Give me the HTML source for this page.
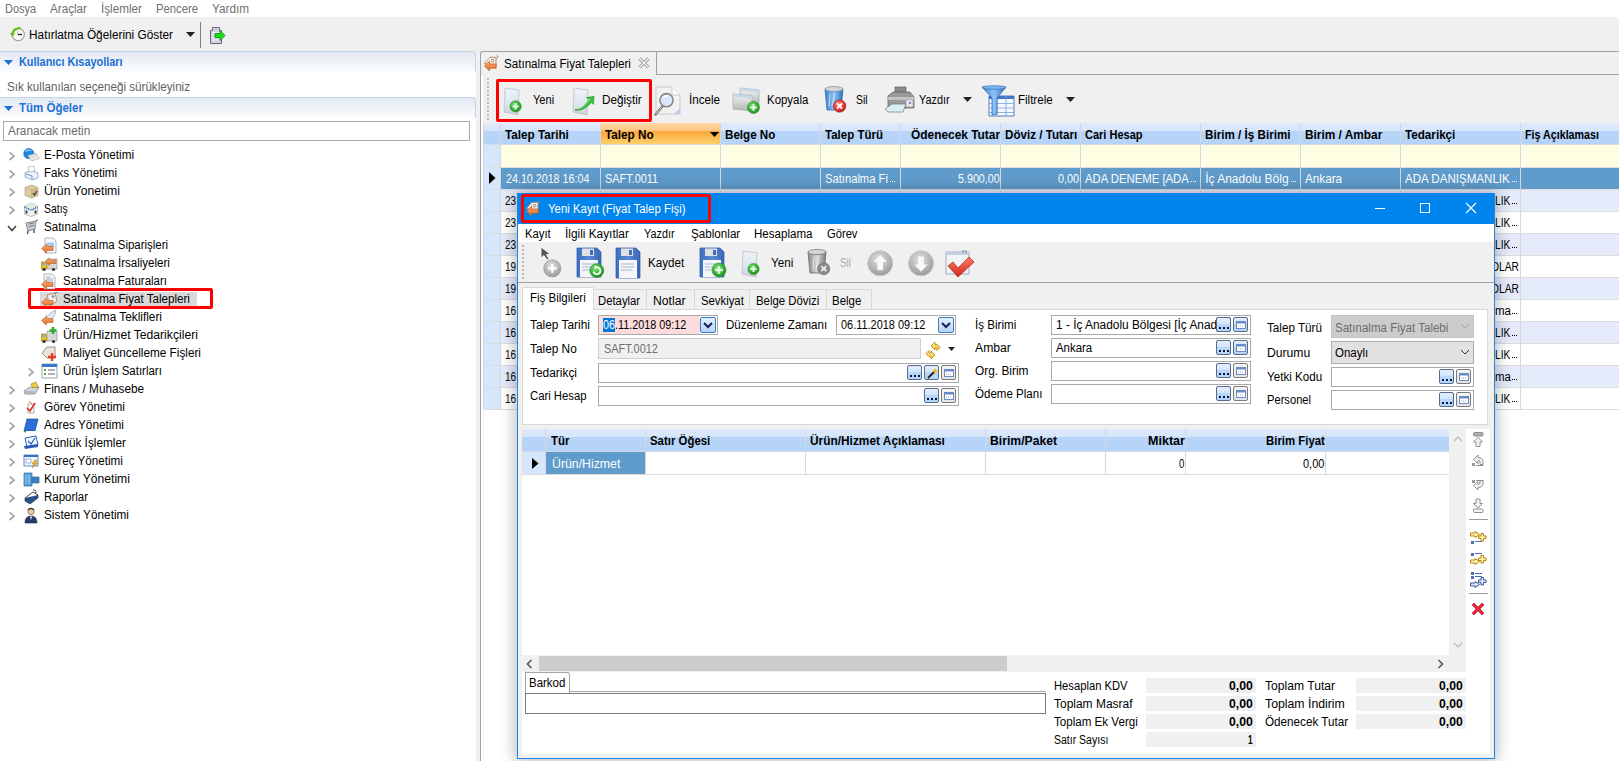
<!DOCTYPE html><html><head><meta charset="utf-8"><style>
html,body{margin:0;padding:0;width:1619px;height:761px;overflow:hidden;background:#f0f0f0;font-family:"Liberation Sans", sans-serif;}
.t{position:absolute;white-space:nowrap;line-height:16px;transform-origin:0 0;}
</style></head><body>
<div style="position:absolute;left:0px;top:0px;width:1619px;height:17px;background:#fff"></div>
<div class="t" style="left:4.50px;top:0.84px;font-size:12px;color:#6f6f6f;font-weight:400;transform:scaleX(0.9118);">Dosya</div>
<div class="t" style="left:50.00px;top:0.84px;font-size:12px;color:#6f6f6f;font-weight:400;transform:scaleX(0.9737);">Araçlar</div>
<div class="t" style="left:101.00px;top:0.84px;font-size:12px;color:#6f6f6f;font-weight:400;transform:scaleX(0.9762);">İşlemler</div>
<div class="t" style="left:156.00px;top:0.84px;font-size:12px;color:#6f6f6f;font-weight:400;transform:scaleX(0.9385);">Pencere</div>
<div class="t" style="left:212.00px;top:0.84px;font-size:12px;color:#6f6f6f;font-weight:400;transform:scaleX(0.9801);">Yardım</div>
<svg style="position:absolute;left:9px;top:26px;" width="18" height="18" viewBox="0 0 18 18"><circle cx="9.2" cy="8.5" r="6.2" fill="#f8f8f8" stroke="#9a9a9a" stroke-width="1.1"/><path d="M8.8 8.5H13" stroke="#222" stroke-width="1.3"/><path d="M8.5 5V8.5" stroke="#c0c0c0" stroke-width="1"/><path d="M11.5 2.2Q5 2.2 3.6 7.5" stroke="#66bb10" stroke-width="2.2" fill="none"/><path d="M0.8 7.2H6.2L3.6 10.8Z" fill="#66bb10"/></svg>
<div class="t" style="left:29.00px;top:26.84px;font-size:12px;color:#000;font-weight:400;transform:scaleX(0.9863);">Hatırlatma Öğelerini Göster</div>
<svg style="position:absolute;left:186px;top:32px;" width="9" height="6" viewBox="0 0 9 6"><path d="M0 0H9L4.5 5Z" fill="#222"/></svg>
<div style="position:absolute;left:200px;top:22px;width:1px;height:26px;background:#7e7e7e"></div>
<svg style="position:absolute;left:204px;top:26px;" width="22" height="19" viewBox="0 0 22 19"><path d="M8.5 1.5H15.5V4.5H17.5V17.5H6.5V4.5H8.5Z" fill="#d4d0e0" stroke="#6a6880" stroke-width="1"/><path d="M8 6.5H16M8 9H16M8 11.5H16M8 14H16" stroke="#f4f2fa" stroke-width="1"/><path d="M11 7.5H16V4.5L21 9.5L16 14.5V11.5H11Z" fill="#18e018" stroke="#0a8a0a" stroke-width="0.8"/></svg>
<div style="position:absolute;left:0px;top:51px;width:476px;height:710px;background:#fff"></div>
<div style="position:absolute;left:0px;top:51px;width:476px;height:21px;background:linear-gradient(#e3e9f2,#fbfcfd);border-top:1px solid #c3d4ea;border-right:1px solid #c3d4ea;border-top-right-radius:3px;box-sizing:border-box"></div>
<svg style="position:absolute;left:4px;top:60px;" width="9" height="5" viewBox="0 0 9 5"><path d="M0 0H9L4.5 5Z" fill="#1a73d9"/></svg>
<div class="t" style="left:18.50px;top:53.84px;font-size:12px;color:#1d70d6;font-weight:700;transform:scaleX(0.9079);">Kullanıcı Kısayolları</div>
<div class="t" style="left:7.00px;top:78.84px;font-size:12px;color:#5f5f5f;font-weight:400;transform:scaleX(0.9695);">Sık kullanılan seçeneği sürükleyiniz</div>
<div style="position:absolute;left:0px;top:97px;width:476px;height:21px;background:linear-gradient(#e3e9f2,#fbfcfd);border-top:1px solid #c3d4ea;border-right:1px solid #c3d4ea;border-top-right-radius:3px;box-sizing:border-box"></div>
<svg style="position:absolute;left:4px;top:106px;" width="9" height="5" viewBox="0 0 9 5"><path d="M0 0H9L4.5 5Z" fill="#1a73d9"/></svg>
<div class="t" style="left:18.50px;top:99.84px;font-size:12px;color:#1d70d6;font-weight:700;transform:scaleX(0.9588);">Tüm Öğeler</div>
<div style="position:absolute;left:3px;top:121px;width:467px;height:20px;background:#fff;border:1px solid #a9a9a9;box-sizing:border-box"></div>
<div class="t" style="left:8.20px;top:122.84px;font-size:12px;color:#6d6d6d;font-weight:400;transform:scaleX(0.9868);">Aranacak metin</div>
<svg style="position:absolute;left:8px;top:150.5px;" width="8" height="11" viewBox="0 0 8 11"><path d="M1.6 1.4L6 5.2L1.6 9" stroke="#a4a4a4" stroke-width="1.7" fill="none"/></svg>
<div class="t" style="left:44.00px;top:147.34px;font-size:12px;color:#000;font-weight:400;transform:scaleX(0.9730);">E-Posta Yönetimi</div>
<svg style="position:absolute;left:8px;top:168.5px;" width="8" height="11" viewBox="0 0 8 11"><path d="M1.6 1.4L6 5.2L1.6 9" stroke="#a4a4a4" stroke-width="1.7" fill="none"/></svg>
<div class="t" style="left:44.00px;top:165.34px;font-size:12px;color:#000;font-weight:400;transform:scaleX(0.9637);">Faks Yönetimi</div>
<svg style="position:absolute;left:8px;top:186.5px;" width="8" height="11" viewBox="0 0 8 11"><path d="M1.6 1.4L6 5.2L1.6 9" stroke="#a4a4a4" stroke-width="1.7" fill="none"/></svg>
<div class="t" style="left:44.00px;top:183.34px;font-size:12px;color:#000;font-weight:400;transform:scaleX(1.0167);">Ürün Yonetimi</div>
<svg style="position:absolute;left:8px;top:204.5px;" width="8" height="11" viewBox="0 0 8 11"><path d="M1.6 1.4L6 5.2L1.6 9" stroke="#a4a4a4" stroke-width="1.7" fill="none"/></svg>
<div class="t" style="left:44.00px;top:201.34px;font-size:12px;color:#000;font-weight:400;transform:scaleX(0.8697);">Satış</div>
<svg style="position:absolute;left:7px;top:224.5px;" width="10" height="7" viewBox="0 0 10 7"><path d="M1 1L5 5.5L9 1" stroke="#444" stroke-width="1.5" fill="none"/></svg>
<div class="t" style="left:44.00px;top:219.34px;font-size:12px;color:#000;font-weight:400;transform:scaleX(0.9630);">Satınalma</div>
<div class="t" style="left:63.00px;top:237.34px;font-size:12px;color:#000;font-weight:400;transform:scaleX(0.9545);">Satınalma Siparişleri</div>
<div class="t" style="left:63.00px;top:255.34px;font-size:12px;color:#000;font-weight:400;transform:scaleX(0.9596);">Satınalma İrsaliyeleri</div>
<div class="t" style="left:63.00px;top:273.34px;font-size:12px;color:#000;font-weight:400;transform:scaleX(0.9563);">Satınalma Faturaları</div>
<div style="position:absolute;left:40px;top:292px;width:157px;height:14px;background:#d9d9d9"></div>
<div class="t" style="left:63.00px;top:291.34px;font-size:12px;color:#000;font-weight:400;transform:scaleX(0.9676);">Satınalma Fiyat Talepleri</div>
<div class="t" style="left:63.00px;top:309.34px;font-size:12px;color:#000;font-weight:400;transform:scaleX(0.9851);">Satınalma Teklifleri</div>
<div class="t" style="left:63.00px;top:327.34px;font-size:12px;color:#000;font-weight:400;transform:scaleX(1.0131);">Ürün/Hizmet Tedarikçileri</div>
<div class="t" style="left:63.00px;top:345.34px;font-size:12px;color:#000;font-weight:400;transform:scaleX(0.9805);">Maliyet Güncelleme Fişleri</div>
<svg style="position:absolute;left:27px;top:366.5px;" width="8" height="11" viewBox="0 0 8 11"><path d="M1.6 1.4L6 5.2L1.6 9" stroke="#a4a4a4" stroke-width="1.7" fill="none"/></svg>
<div class="t" style="left:63.00px;top:363.34px;font-size:12px;color:#000;font-weight:400;transform:scaleX(0.9565);">Ürün İşlem Satırları</div>
<svg style="position:absolute;left:8px;top:384.5px;" width="8" height="11" viewBox="0 0 8 11"><path d="M1.6 1.4L6 5.2L1.6 9" stroke="#a4a4a4" stroke-width="1.7" fill="none"/></svg>
<div class="t" style="left:44.00px;top:381.34px;font-size:12px;color:#000;font-weight:400;transform:scaleX(0.9804);">Finans / Muhasebe</div>
<svg style="position:absolute;left:8px;top:402.5px;" width="8" height="11" viewBox="0 0 8 11"><path d="M1.6 1.4L6 5.2L1.6 9" stroke="#a4a4a4" stroke-width="1.7" fill="none"/></svg>
<div class="t" style="left:44.00px;top:399.34px;font-size:12px;color:#000;font-weight:400;transform:scaleX(0.9818);">Görev Yönetimi</div>
<svg style="position:absolute;left:8px;top:420.5px;" width="8" height="11" viewBox="0 0 8 11"><path d="M1.6 1.4L6 5.2L1.6 9" stroke="#a4a4a4" stroke-width="1.7" fill="none"/></svg>
<div class="t" style="left:44.00px;top:417.34px;font-size:12px;color:#000;font-weight:400;transform:scaleX(0.9846);">Adres Yönetimi</div>
<svg style="position:absolute;left:8px;top:438.5px;" width="8" height="11" viewBox="0 0 8 11"><path d="M1.6 1.4L6 5.2L1.6 9" stroke="#a4a4a4" stroke-width="1.7" fill="none"/></svg>
<div class="t" style="left:44.00px;top:435.34px;font-size:12px;color:#000;font-weight:400;transform:scaleX(0.9820);">Günlük İşlemler</div>
<svg style="position:absolute;left:8px;top:456.5px;" width="8" height="11" viewBox="0 0 8 11"><path d="M1.6 1.4L6 5.2L1.6 9" stroke="#a4a4a4" stroke-width="1.7" fill="none"/></svg>
<div class="t" style="left:44.00px;top:453.34px;font-size:12px;color:#000;font-weight:400;transform:scaleX(0.9723);">Süreç Yönetimi</div>
<svg style="position:absolute;left:8px;top:474.5px;" width="8" height="11" viewBox="0 0 8 11"><path d="M1.6 1.4L6 5.2L1.6 9" stroke="#a4a4a4" stroke-width="1.7" fill="none"/></svg>
<div class="t" style="left:44.00px;top:471.34px;font-size:12px;color:#000;font-weight:400;transform:scaleX(1.0088);">Kurum Yönetimi</div>
<svg style="position:absolute;left:8px;top:492.5px;" width="8" height="11" viewBox="0 0 8 11"><path d="M1.6 1.4L6 5.2L1.6 9" stroke="#a4a4a4" stroke-width="1.7" fill="none"/></svg>
<div class="t" style="left:44.00px;top:489.34px;font-size:12px;color:#000;font-weight:400;transform:scaleX(0.9565);">Raporlar</div>
<svg style="position:absolute;left:8px;top:510.5px;" width="8" height="11" viewBox="0 0 8 11"><path d="M1.6 1.4L6 5.2L1.6 9" stroke="#a4a4a4" stroke-width="1.7" fill="none"/></svg>
<div class="t" style="left:44.00px;top:507.34px;font-size:12px;color:#000;font-weight:400;transform:scaleX(0.9827);">Sistem Yönetimi</div>
<div style="position:absolute;left:28px;top:288px;width:185px;height:21px;border:3px solid #ff0000;box-sizing:border-box;border-radius:2px"></div>
<div style="position:absolute;left:476px;top:51px;width:4px;height:710px;background:#f0f0f0"></div>
<div style="position:absolute;left:481px;top:52px;width:1138px;height:709px;background:#f0f0f0"></div>
<div style="position:absolute;left:480px;top:51px;width:1200px;height:800px;border-left:1px solid #a0a0a0;border-top:1px solid #a0a0a0;border-top-left-radius:3px;box-sizing:border-box"></div>
<div style="position:absolute;left:656px;top:52px;width:1px;height:22px;background:#a0a0a0"></div>
<div style="position:absolute;left:656px;top:74px;width:963px;height:1px;background:#a0a0a0"></div>
<div class="t" style="left:504.20px;top:55.84px;font-size:12px;color:#000;font-weight:400;transform:scaleX(0.9676);">Satınalma Fiyat Talepleri</div>
<svg style="position:absolute;left:638px;top:57px;" width="12" height="12" viewBox="0 0 12 12"><path d="M1.5 1.5L10.5 10.5M10.5 1.5L1.5 10.5" stroke="#888" stroke-width="3"/><path d="M1.5 1.5L10.5 10.5M10.5 1.5L1.5 10.5" stroke="#fff" stroke-width="1.2"/></svg>
<div style="position:absolute;left:481px;top:76px;width:2px;height:685px;background:#fff"></div>
<div style="position:absolute;left:487px;top:78px;width:2px;height:2px;background:#a8a8a8;border-radius:1px"></div>
<div style="position:absolute;left:487px;top:82px;width:2px;height:2px;background:#a8a8a8;border-radius:1px"></div>
<div style="position:absolute;left:487px;top:86px;width:2px;height:2px;background:#a8a8a8;border-radius:1px"></div>
<div style="position:absolute;left:487px;top:90px;width:2px;height:2px;background:#a8a8a8;border-radius:1px"></div>
<div style="position:absolute;left:487px;top:94px;width:2px;height:2px;background:#a8a8a8;border-radius:1px"></div>
<div style="position:absolute;left:487px;top:98px;width:2px;height:2px;background:#a8a8a8;border-radius:1px"></div>
<div style="position:absolute;left:487px;top:102px;width:2px;height:2px;background:#a8a8a8;border-radius:1px"></div>
<div style="position:absolute;left:487px;top:106px;width:2px;height:2px;background:#a8a8a8;border-radius:1px"></div>
<div style="position:absolute;left:487px;top:110px;width:2px;height:2px;background:#a8a8a8;border-radius:1px"></div>
<div style="position:absolute;left:487px;top:114px;width:2px;height:2px;background:#a8a8a8;border-radius:1px"></div>
<div style="position:absolute;left:487px;top:118px;width:2px;height:2px;background:#a8a8a8;border-radius:1px"></div>
<div class="t" style="left:533.40px;top:91.84px;font-size:12px;color:#000;font-weight:400;transform:scaleX(0.9217);">Yeni</div>
<div class="t" style="left:602.20px;top:91.84px;font-size:12px;color:#000;font-weight:400;transform:scaleX(0.9767);">Değiştir</div>
<div class="t" style="left:689.00px;top:91.84px;font-size:12px;color:#000;font-weight:400;transform:scaleX(0.9688);">İncele</div>
<div class="t" style="left:767.10px;top:91.84px;font-size:12px;color:#000;font-weight:400;transform:scaleX(0.9540);">Kopyala</div>
<div class="t" style="left:856.00px;top:91.84px;font-size:12px;color:#000;font-weight:400;transform:scaleX(0.8604);">Sil</div>
<div class="t" style="left:919.30px;top:91.84px;font-size:12px;color:#000;font-weight:400;transform:scaleX(0.9067);">Yazdır</div>
<div class="t" style="left:1018.10px;top:91.84px;font-size:12px;color:#000;font-weight:400;transform:scaleX(0.9611);">Filtrele</div>
<svg style="position:absolute;left:963px;top:97px;" width="9" height="5" viewBox="0 0 9 5"><path d="M0 0H9L4.5 5Z" fill="#222"/></svg>
<svg style="position:absolute;left:1066px;top:97px;" width="9" height="5" viewBox="0 0 9 5"><path d="M0 0H9L4.5 5Z" fill="#222"/></svg>
<div style="position:absolute;left:496px;top:79px;width:156px;height:43px;border:3px solid #ff0000;box-sizing:border-box;border-radius:2px"></div>
<div style="position:absolute;left:484px;top:123px;width:1135px;height:638px;background:#fff"></div>
<div style="position:absolute;left:484px;top:123px;width:1135px;height:21px;background:linear-gradient(#dfeafb 0,#d6e5fa 8px,#b8d5f9 8px,#b5d3f8 21px)"></div>
<div style="position:absolute;left:600px;top:123px;width:120px;height:21px;background:linear-gradient(#fed9a6 0,#fcc47f 8px,#fba63c 8px,#fcd06b 21px)"></div>
<div style="position:absolute;left:484px;top:144px;width:1135px;height:1px;background:#d5dbe6"></div>
<div class="t" style="left:505.20px;top:127.34px;font-size:12px;color:#000;font-weight:700;transform:scaleX(0.9740);">Talep Tarihi</div>
<div class="t" style="left:605.40px;top:127.34px;font-size:12px;color:#000;font-weight:700;transform:scaleX(0.9749);">Talep No</div>
<div class="t" style="left:725.30px;top:127.34px;font-size:12px;color:#000;font-weight:700;transform:scaleX(0.9673);">Belge No</div>
<div class="t" style="left:825.30px;top:127.34px;font-size:12px;color:#000;font-weight:700;transform:scaleX(0.9587);">Talep Türü</div>
<div class="t" style="left:911.10px;top:127.34px;font-size:12px;color:#000;font-weight:700;transform:scaleX(0.9916);">Ödenecek Tutar</div>
<div style="position:absolute;left:1000px;top:123px;width:80px;height:21px;overflow:hidden">
<div class="t" style="left:5.00px;top:4.34px;font-size:12px;color:#000;font-weight:700;transform:scaleX(0.9700);">Döviz / Tutarı</div>
</div>
<div class="t" style="left:1085.00px;top:127.34px;font-size:12px;color:#000;font-weight:700;transform:scaleX(0.9179);">Cari Hesap</div>
<div class="t" style="left:1205.20px;top:127.34px;font-size:12px;color:#000;font-weight:700;transform:scaleX(0.9716);">Birim / İş Birimi</div>
<div class="t" style="left:1305.00px;top:127.34px;font-size:12px;color:#000;font-weight:700;transform:scaleX(0.9879);">Birim / Ambar</div>
<div class="t" style="left:1405.20px;top:127.34px;font-size:12px;color:#000;font-weight:700;transform:scaleX(0.9720);">Tedarikçi</div>
<div class="t" style="left:1525.40px;top:127.34px;font-size:12px;color:#000;font-weight:700;transform:scaleX(0.8916);">Fiş Açıklaması</div>
<svg style="position:absolute;left:710px;top:132px;" width="9" height="5" viewBox="0 0 9 5"><path d="M0 0H9L4.5 5Z" fill="#000"/></svg>
<div style="position:absolute;left:500px;top:145px;width:1119px;height:22px;background:#fefee2"></div>
<div style="position:absolute;left:484px;top:145px;width:16px;height:264px;background:#d6e6fb"></div>
<div style="position:absolute;left:484px;top:167px;width:1135px;height:1px;background:#dedede"></div>
<div style="position:absolute;left:500px;top:168px;width:1119px;height:21px;background:#5f9bcb"></div>
<div style="position:absolute;left:484px;top:189px;width:1135px;height:1px;background:#dcdcdc"></div>
<svg style="position:absolute;left:489px;top:172px;" width="7" height="12" viewBox="0 0 7 12"><path d="M0 0L6.5 6L0 12Z" fill="#000"/></svg>
<div class="t" style="left:825.30px;top:171.34px;font-size:12px;color:#fff;font-weight:400;transform:scaleX(0.9333);">Satınalma Fi</div>
<div style="position:absolute;left:890.3px;top:181px;width:1.2px;height:1.2px;background:#fff"></div>
<div style="position:absolute;left:892.3px;top:181px;width:1.2px;height:1.2px;background:#fff"></div>
<div style="position:absolute;left:894.3px;top:181px;width:1.2px;height:1.2px;background:#fff"></div>
<div class="t" style="left:1085.00px;top:171.34px;font-size:12px;color:#fff;font-weight:400;transform:scaleX(0.9436);">ADA DENEME [ADA</div>
<div style="position:absolute;left:1190.8px;top:181px;width:1.2px;height:1.2px;background:#fff"></div>
<div style="position:absolute;left:1192.8px;top:181px;width:1.2px;height:1.2px;background:#fff"></div>
<div style="position:absolute;left:1194.8px;top:181px;width:1.2px;height:1.2px;background:#fff"></div>
<div class="t" style="left:1205.20px;top:171.34px;font-size:12px;color:#fff;font-weight:400;transform:scaleX(1.0000);">İç Anadolu Bölg</div>
<div style="position:absolute;left:1290.7px;top:181px;width:1.2px;height:1.2px;background:#fff"></div>
<div style="position:absolute;left:1292.7px;top:181px;width:1.2px;height:1.2px;background:#fff"></div>
<div style="position:absolute;left:1294.7px;top:181px;width:1.2px;height:1.2px;background:#fff"></div>
<div class="t" style="left:1405.20px;top:171.34px;font-size:12px;color:#fff;font-weight:400;transform:scaleX(0.9637);">ADA DANIŞMANLIK</div>
<div style="position:absolute;left:1512.0px;top:181px;width:1.2px;height:1.2px;background:#fff"></div>
<div style="position:absolute;left:1514.0px;top:181px;width:1.2px;height:1.2px;background:#fff"></div>
<div style="position:absolute;left:1516.0px;top:181px;width:1.2px;height:1.2px;background:#fff"></div>
<div class="t" style="left:505.60px;top:171.34px;font-size:12px;color:#fff;font-weight:400;transform:scaleX(0.8920);">24.10.2018 16:04</div>
<div class="t" style="left:605.40px;top:171.34px;font-size:12px;color:#fff;font-weight:400;transform:scaleX(0.9094);">SAFT.0011</div>
<div class="t" style="left:957.50px;top:171.34px;font-size:12px;color:#fff;font-weight:400;transform:scaleX(0.8920);">5.900,00</div>
<div class="t" style="left:1057.90px;top:171.34px;font-size:12px;color:#fff;font-weight:400;transform:scaleX(0.9032);">0,00</div>
<div class="t" style="left:1305.00px;top:171.34px;font-size:12px;color:#fff;font-weight:400;transform:scaleX(0.9737);">Ankara</div>
<div style="position:absolute;left:500px;top:190px;width:1119px;height:21px;background:#e6ebfc"></div>
<div style="position:absolute;left:484px;top:211px;width:1135px;height:1px;background:#dcdcdc"></div>
<div class="t" style="left:505.00px;top:193.34px;font-size:12px;color:#000;font-weight:400;transform:scaleX(0.8302);">23</div>
<div class="t" style="left:1494.90px;top:193.34px;font-size:12px;color:#000;font-weight:400;transform:scaleX(0.8500);">LIK</div>
<div style="position:absolute;left:1511.5px;top:203px;width:1.2px;height:1.2px;background:#000"></div>
<div style="position:absolute;left:1513.5px;top:203px;width:1.2px;height:1.2px;background:#000"></div>
<div style="position:absolute;left:1515.5px;top:203px;width:1.2px;height:1.2px;background:#000"></div>
<div style="position:absolute;left:500px;top:212px;width:1119px;height:21px;background:#ffffff"></div>
<div style="position:absolute;left:484px;top:233px;width:1135px;height:1px;background:#dcdcdc"></div>
<div class="t" style="left:505.00px;top:215.34px;font-size:12px;color:#000;font-weight:400;transform:scaleX(0.8302);">23</div>
<div class="t" style="left:1494.90px;top:215.34px;font-size:12px;color:#000;font-weight:400;transform:scaleX(0.8500);">LIK</div>
<div style="position:absolute;left:1511.5px;top:225px;width:1.2px;height:1.2px;background:#000"></div>
<div style="position:absolute;left:1513.5px;top:225px;width:1.2px;height:1.2px;background:#000"></div>
<div style="position:absolute;left:1515.5px;top:225px;width:1.2px;height:1.2px;background:#000"></div>
<div style="position:absolute;left:500px;top:234px;width:1119px;height:21px;background:#e6ebfc"></div>
<div style="position:absolute;left:484px;top:255px;width:1135px;height:1px;background:#dcdcdc"></div>
<div class="t" style="left:505.00px;top:237.34px;font-size:12px;color:#000;font-weight:400;transform:scaleX(0.8302);">23</div>
<div class="t" style="left:1494.90px;top:237.34px;font-size:12px;color:#000;font-weight:400;transform:scaleX(0.8500);">LIK</div>
<div style="position:absolute;left:1511.5px;top:247px;width:1.2px;height:1.2px;background:#000"></div>
<div style="position:absolute;left:1513.5px;top:247px;width:1.2px;height:1.2px;background:#000"></div>
<div style="position:absolute;left:1515.5px;top:247px;width:1.2px;height:1.2px;background:#000"></div>
<div style="position:absolute;left:500px;top:256px;width:1119px;height:21px;background:#ffffff"></div>
<div style="position:absolute;left:484px;top:277px;width:1135px;height:1px;background:#dcdcdc"></div>
<div class="t" style="left:505.00px;top:259.34px;font-size:12px;color:#000;font-weight:400;transform:scaleX(0.8302);">19</div>
<div class="t" style="left:1491.30px;top:259.34px;font-size:12px;color:#000;font-weight:400;transform:scaleX(0.8550);">OLAR</div>
<div style="position:absolute;left:500px;top:278px;width:1119px;height:21px;background:#e6ebfc"></div>
<div style="position:absolute;left:484px;top:299px;width:1135px;height:1px;background:#dcdcdc"></div>
<div class="t" style="left:505.00px;top:281.34px;font-size:12px;color:#000;font-weight:400;transform:scaleX(0.8302);">19</div>
<div class="t" style="left:1491.30px;top:281.34px;font-size:12px;color:#000;font-weight:400;transform:scaleX(0.8550);">OLAR</div>
<div style="position:absolute;left:500px;top:300px;width:1119px;height:21px;background:#ffffff"></div>
<div style="position:absolute;left:484px;top:321px;width:1135px;height:1px;background:#dcdcdc"></div>
<div class="t" style="left:505.00px;top:303.34px;font-size:12px;color:#000;font-weight:400;transform:scaleX(0.8302);">16</div>
<div class="t" style="left:1494.50px;top:303.34px;font-size:12px;color:#000;font-weight:400;transform:scaleX(0.9552);">ma</div>
<div style="position:absolute;left:1512.0px;top:313px;width:1.2px;height:1.2px;background:#000"></div>
<div style="position:absolute;left:1514.0px;top:313px;width:1.2px;height:1.2px;background:#000"></div>
<div style="position:absolute;left:1516.0px;top:313px;width:1.2px;height:1.2px;background:#000"></div>
<div style="position:absolute;left:500px;top:322px;width:1119px;height:21px;background:#e6ebfc"></div>
<div style="position:absolute;left:484px;top:343px;width:1135px;height:1px;background:#dcdcdc"></div>
<div class="t" style="left:505.00px;top:325.34px;font-size:12px;color:#000;font-weight:400;transform:scaleX(0.8302);">16</div>
<div class="t" style="left:1494.90px;top:325.34px;font-size:12px;color:#000;font-weight:400;transform:scaleX(0.8500);">LIK</div>
<div style="position:absolute;left:1511.5px;top:335px;width:1.2px;height:1.2px;background:#000"></div>
<div style="position:absolute;left:1513.5px;top:335px;width:1.2px;height:1.2px;background:#000"></div>
<div style="position:absolute;left:1515.5px;top:335px;width:1.2px;height:1.2px;background:#000"></div>
<div style="position:absolute;left:500px;top:344px;width:1119px;height:21px;background:#ffffff"></div>
<div style="position:absolute;left:484px;top:365px;width:1135px;height:1px;background:#dcdcdc"></div>
<div class="t" style="left:505.00px;top:347.34px;font-size:12px;color:#000;font-weight:400;transform:scaleX(0.8302);">16</div>
<div class="t" style="left:1494.90px;top:347.34px;font-size:12px;color:#000;font-weight:400;transform:scaleX(0.8500);">LIK</div>
<div style="position:absolute;left:1511.5px;top:357px;width:1.2px;height:1.2px;background:#000"></div>
<div style="position:absolute;left:1513.5px;top:357px;width:1.2px;height:1.2px;background:#000"></div>
<div style="position:absolute;left:1515.5px;top:357px;width:1.2px;height:1.2px;background:#000"></div>
<div style="position:absolute;left:500px;top:366px;width:1119px;height:21px;background:#e6ebfc"></div>
<div style="position:absolute;left:484px;top:387px;width:1135px;height:1px;background:#dcdcdc"></div>
<div class="t" style="left:505.00px;top:369.34px;font-size:12px;color:#000;font-weight:400;transform:scaleX(0.8302);">16</div>
<div class="t" style="left:1494.50px;top:369.34px;font-size:12px;color:#000;font-weight:400;transform:scaleX(0.9552);">ma</div>
<div style="position:absolute;left:1512.0px;top:379px;width:1.2px;height:1.2px;background:#000"></div>
<div style="position:absolute;left:1514.0px;top:379px;width:1.2px;height:1.2px;background:#000"></div>
<div style="position:absolute;left:1516.0px;top:379px;width:1.2px;height:1.2px;background:#000"></div>
<div style="position:absolute;left:500px;top:388px;width:1119px;height:21px;background:#ffffff"></div>
<div style="position:absolute;left:484px;top:409px;width:1135px;height:1px;background:#dcdcdc"></div>
<div class="t" style="left:505.00px;top:391.34px;font-size:12px;color:#000;font-weight:400;transform:scaleX(0.8302);">16</div>
<div class="t" style="left:1494.90px;top:391.34px;font-size:12px;color:#000;font-weight:400;transform:scaleX(0.8500);">LIK</div>
<div style="position:absolute;left:1511.5px;top:401px;width:1.2px;height:1.2px;background:#000"></div>
<div style="position:absolute;left:1513.5px;top:401px;width:1.2px;height:1.2px;background:#000"></div>
<div style="position:absolute;left:1515.5px;top:401px;width:1.2px;height:1.2px;background:#000"></div>
<div style="position:absolute;left:483px;top:123px;width:1px;height:286px;background:#cfd6e0"></div>
<div style="position:absolute;left:500px;top:123px;width:1px;height:286px;background:#d4d7dd"></div>
<div style="position:absolute;left:600px;top:123px;width:1px;height:286px;background:#d4d7dd"></div>
<div style="position:absolute;left:720px;top:123px;width:1px;height:286px;background:#d4d7dd"></div>
<div style="position:absolute;left:820px;top:123px;width:1px;height:286px;background:#d4d7dd"></div>
<div style="position:absolute;left:900px;top:123px;width:1px;height:286px;background:#d4d7dd"></div>
<div style="position:absolute;left:1000px;top:123px;width:1px;height:286px;background:#d4d7dd"></div>
<div style="position:absolute;left:1080px;top:123px;width:1px;height:286px;background:#d4d7dd"></div>
<div style="position:absolute;left:1200px;top:123px;width:1px;height:286px;background:#d4d7dd"></div>
<div style="position:absolute;left:1300px;top:123px;width:1px;height:286px;background:#d4d7dd"></div>
<div style="position:absolute;left:1400px;top:123px;width:1px;height:286px;background:#d4d7dd"></div>
<div style="position:absolute;left:1520px;top:123px;width:1px;height:286px;background:#d4d7dd"></div>
<svg width="0" height="0" style="position:absolute"><defs>
<linearGradient id="gpage" x1="0" y1="0" x2="0" y2="1"><stop offset="0" stop-color="#eef3f8"/><stop offset="0.6" stop-color="#dde5ee"/><stop offset="1" stop-color="#c9d2dc"/></linearGradient>
<radialGradient id="ggreen" cx="0.4" cy="0.35" r="0.7"><stop offset="0" stop-color="#7ee07a"/><stop offset="0.6" stop-color="#34b233"/><stop offset="1" stop-color="#1d8a22"/></radialGradient>
<radialGradient id="gred" cx="0.4" cy="0.35" r="0.7"><stop offset="0" stop-color="#ff8a8a"/><stop offset="0.6" stop-color="#e23a3a"/><stop offset="1" stop-color="#b51c1c"/></radialGradient>
<linearGradient id="gblue" x1="0" y1="0" x2="1" y2="0"><stop offset="0" stop-color="#3a7fd0"/><stop offset="0.5" stop-color="#8ec3f5"/><stop offset="1" stop-color="#2f6fc0"/></linearGradient>
<linearGradient id="ggray" x1="0" y1="0" x2="0" y2="1"><stop offset="0" stop-color="#f4f4f4"/><stop offset="1" stop-color="#b4b4b4"/></linearGradient>
<linearGradient id="gorange" x1="0" y1="0" x2="0" y2="1"><stop offset="0" stop-color="#ffb27a"/><stop offset="1" stop-color="#e0662a"/></linearGradient>
</defs></svg>
<svg style="position:absolute;left:503px;top:87px;" width="22" height="30" viewBox="0 0 22 30"><path d="M2 1L16 3L15 28L1 25Z" fill="url(#gpage)" stroke="#b9c2cc" stroke-width="0.8"/><circle cx="12.6" cy="19.4" r="5.6" fill="url(#ggreen)" stroke="#2a8a2a" stroke-width="0.6"/><path d="M9.52 19.4H15.68M12.6 16.32V22.479999999999997" stroke="#e8f5e8" stroke-width="2.02"/></svg>
<svg style="position:absolute;left:572px;top:87px;" width="26" height="30" viewBox="0 0 26 30"><path d="M2 1L16 3L15 28L1 25Z" fill="url(#gpage)" stroke="#b9c2cc" stroke-width="0.8"/><path d="M3 23 C9 22 14 18 17 12 L14.5 10.5 L22 9.5 L21.5 17.5 L19.5 15 C16 20 10 24 3 23Z" fill="#3cc43c" stroke="#22952a" stroke-width="0.7"/><path d="M6 22 C11 20 15 16 18 12" stroke="#c8f5c8" stroke-width="0.8" fill="none"/></svg>
<svg style="position:absolute;left:653px;top:86px;" width="30" height="30" viewBox="0 0 30 30"><path d="M3 1H19L27 9V28H3Z" fill="#f2f2f2" stroke="#c4c4c4" stroke-width="0.9"/><path d="M19 1V9H27" fill="#fff" stroke="#c4c4c4" stroke-width="0.9"/><path d="M21 28L27 22V28Z" fill="#b9cdf0"/><path d="M2.5 28.5L9 21" stroke="#777" stroke-width="2.6" stroke-linecap="round"/><path d="M2.5 28.5L9 21" stroke="#ddd" stroke-width="0.9"/><circle cx="13.5" cy="14.2" r="6.6" fill="#d8e8fb" stroke="#8a8a8a" stroke-width="1.6"/><path d="M10 12 Q12 9.5 15.5 10" stroke="#fff" stroke-width="1.2" fill="none"/></svg>
<svg style="position:absolute;left:731px;top:86px;" width="32" height="30" viewBox="0 0 32 30"><path d="M9 2L28 4V19L9 17Z" fill="url(#ggray)" stroke="#a8b0b8" stroke-width="0.8"/><path d="M9 2L28 4V6.5L9 4.5Z" fill="#c5d8ea"/><path d="M2 8L21 10V25L2 23Z" fill="url(#ggray)" stroke="#a8b0b8" stroke-width="0.8"/><path d="M2 8L21 10V12.5L2 10.5Z" fill="#c5d8ea"/><circle cx="22.5" cy="21.5" r="6" fill="url(#ggreen)" stroke="#2a8a2a" stroke-width="0.6"/><path d="M19.2 21.5H25.8M22.5 18.2V24.8" stroke="#e8f5e8" stroke-width="2.16"/></svg>
<svg style="position:absolute;left:823px;top:85px;" width="26" height="30" viewBox="0 0 26 30"><path d="M2 4H20L18 25H4Z" fill="url(#gblue)" stroke="#3a6aa8" stroke-width="0.8"/><ellipse cx="11" cy="4" rx="9" ry="2.5" fill="#cfd6de" stroke="#8a96a4" stroke-width="0.8"/><path d="M7 9L6 21M12 8L9 21" stroke="#d8ecff" stroke-width="1" opacity="0.8"/><circle cx="16.6" cy="21" r="6.2" fill="url(#gred)" stroke="#a01818" stroke-width="0.6"/><path d="M14 18.4L19.2 23.6M19.2 18.4L14 23.6" stroke="#fff" stroke-width="1.8"/></svg>
<svg style="position:absolute;left:884px;top:85px;" width="32" height="30" viewBox="0 0 32 30"><path d="M11 2H22V12H11Z" fill="#8a8a8a" stroke="#555" stroke-width="0.6"/><path d="M4 11L9 7H26L30 12V23H4Z" fill="#9a9a9a" stroke="#555" stroke-width="0.7"/><path d="M4 12H30V15H4Z" fill="#c4c4c4"/><path d="M22 15H29V22H22Z" fill="#e6e6e6" stroke="#999" stroke-width="0.5"/><path d="M1 24L8 19H22L19 27H4Z" fill="#d9eef6" stroke="#777" stroke-width="0.7"/><circle cx="26" cy="18" r="0.9" fill="#2060c0"/></svg>
<svg style="position:absolute;left:981px;top:85px;" width="34" height="32" viewBox="0 0 34 32"><path d="M8 11H33V31H8Z" fill="#f4f8ff" stroke="#2e5fb0" stroke-width="0.8"/><path d="M8 11H33V14H8Z" fill="#3f76c8"/><path d="M8 18.5H33M8 23H33M8 27.5H33M16 11V31M25 11V31" stroke="#7fa0d8" stroke-width="0.8"/><path d="M1 2H25L16 13V29L11 30V13Z" fill="url(#gblue)" stroke="#2d5ea8" stroke-width="0.7"/><ellipse cx="13" cy="2.5" rx="12" ry="1.8" fill="#7cb8f0" stroke="#2d5ea8" stroke-width="0.6"/></svg>
<svg style="position:absolute;left:480px;top:52px;" width="20" height="20" viewBox="0 0 20 20"><path d="M4.3 11.5L10 5.3H16V12.5H10Z" fill="#fdf1e6" stroke="#a88a6a" stroke-width="0.9"/><circle cx="12.6" cy="8.6" r="1.4" fill="#fff" stroke="#7a7a7a" stroke-width="0.9"/><path d="M16 6.5Q19.5 5 16.3 3" stroke="#9a8a7a" stroke-width="0.9" fill="none"/><path d="M4.5 14L9.5 9.2V12H16.2V16.2H9.5V18.8Z" fill="url(#gorange)" stroke="#c8601e" stroke-width="0.8" stroke-linejoin="round"/></svg>
<svg style="position:absolute;left:23px;top:147px;" width="17" height="17" viewBox="0 0 17 17"><circle cx="5.8" cy="6.6" r="5" fill="#1e88e0" stroke="#0d5fb0" stroke-width="0.7"/><path d="M2.5 4.5Q5 2.5 8.5 3.5" stroke="#9fd8ff" stroke-width="1.2" fill="none"/><path d="M5 8.5L13 6.5L16.5 11.5L8.5 14Z" fill="#ececec" stroke="#b0b0b0" stroke-width="0.7"/><path d="M5 8.5L11 10.5L13 6.5" stroke="#c0c0c0" stroke-width="0.6" fill="none"/></svg>
<svg style="position:absolute;left:23px;top:165px;" width="17" height="17" viewBox="0 0 17 17"><path d="M2 8L8 5L15 8V13L9 15L2 12Z" fill="#e8f0fa" stroke="#7a90b0" stroke-width="0.7"/><path d="M5 2L11 1L12 6L6 7Z" fill="#fff" stroke="#8aa" stroke-width="0.6"/><path d="M3 9L9 11V14" stroke="#5a7fb0" stroke-width="0.8" fill="none"/></svg>
<svg style="position:absolute;left:23px;top:183px;" width="17" height="17" viewBox="0 0 17 17"><path d="M2 4.5L8.5 2L15 4.5V12.5L8.5 15L2 12.5Z" fill="#dccca4" stroke="#a89868" stroke-width="0.6"/><path d="M2 4.5L8.5 7L15 4.5M8.5 7V15" stroke="#b8a678" stroke-width="0.7" fill="none"/><path d="M8.5 7L15 4.5V12.5L8.5 15Z" fill="#cbb88e"/><path d="M10 10L11.5 12L14 8" stroke="#333" stroke-width="1.2" fill="none"/></svg>
<svg style="position:absolute;left:23px;top:201px;" width="17" height="17" viewBox="0 0 17 17"><path d="M1.5 5L8 2L14.5 5V13L8 15.5L1.5 13Z" fill="#f0f0f0" stroke="#999" stroke-width="0.6"/><path d="M8 2L14.5 5L8 8L1.5 5Z" fill="#e0ece0"/><path d="M1.5 6L7.5 9M8.5 9L14.5 6" stroke="#2a60c0" stroke-width="1.6" stroke-dasharray="1.2 0.8" fill="none"/><path d="M3.5 9.5V12.5M12.5 9.5V12.5" stroke="#333" stroke-width="1.8"/></svg>
<svg style="position:absolute;left:23px;top:219px;" width="17" height="17" viewBox="0 0 17 17"><path d="M3 4L13 2L12 10L5 12Z" fill="#c8ccd0" stroke="#6a7078" stroke-width="0.8"/><path d="M13 2L15 0.5" stroke="#555" stroke-width="1"/><path d="M6 5L11 4M6 7.5L11 6.5" stroke="#5a6470" stroke-width="0.8"/><path d="M5 12L4.5 15M11 10.5L11 14" stroke="#4a5058" stroke-width="1.4"/></svg>
<svg style="position:absolute;left:41px;top:237px;" width="17" height="17" viewBox="0 0 17 17"><path d="M4 1H12L15 4V16H4Z" fill="#f4f8fc" stroke="#8a9ab0" stroke-width="0.7"/><path d="M6 5H13V12H6Z" fill="#cfe2f7"/><path d="M6 7H13M6 9H13" stroke="#5a90d0" stroke-width="0.7"/><path d="M0.5 11.5L5.5 7V9.5H12V13.5H5.5V16Z" fill="url(#gorange)" stroke="#c05a20" stroke-width="0.6"/></svg>
<svg style="position:absolute;left:41px;top:255px;" width="17" height="17" viewBox="0 0 17 17"><path d="M0 7H5L6 9V14H0Z" fill="#f0c020" stroke="#8a6a10" stroke-width="0.6"/><path d="M1 8H4V10H1Z" fill="#6ab0e0"/><path d="M6 4H16V14H6Z" fill="#d8d8d8" stroke="#888" stroke-width="0.6"/><circle cx="3" cy="14.5" r="1.6" fill="#333"/><circle cx="12.5" cy="14.5" r="1.6" fill="#333"/><path d="M4 6.5L8.5 3V5H15V8.5H8.5V10.5Z" fill="url(#gorange)" stroke="#c05a20" stroke-width="0.6"/></svg>
<svg style="position:absolute;left:41px;top:273px;" width="17" height="17" viewBox="0 0 17 17"><path d="M3 1H11L14 4V16H3Z" fill="#f6f6f6" stroke="#8a9ab0" stroke-width="0.7"/><path d="M5 4H9M5 6H12M5 8H12" stroke="#90a0b8" stroke-width="0.8"/><path d="M0.5 11.5L5.5 7V9.5H12V13.5H5.5V16Z" fill="url(#gorange)" stroke="#c05a20" stroke-width="0.6"/></svg>
<svg style="position:absolute;left:41px;top:291px;" width="17" height="17" viewBox="0 0 17 17"><path d="M6 4L14 2L16 10L9 15Z" fill="#f3ece4" stroke="#a08060" stroke-width="0.8"/><circle cx="12" cy="5.5" r="1.3" fill="#5a8fd0"/><path d="M13 3Q15 0 17 2" stroke="#666" stroke-width="0.8" fill="none"/><path d="M0.5 11.5L5.5 7V9.5H12V13.5H5.5V16Z" fill="url(#gorange)" stroke="#c05a20" stroke-width="0.6"/></svg>
<svg style="position:absolute;left:41px;top:309px;" width="17" height="17" viewBox="0 0 17 17"><path d="M3 15Q4 6 15 1Q14 10 5 14Z" fill="#e4eef2" stroke="#8aa0a8" stroke-width="0.7"/><path d="M0.5 11.5L5.5 7V9.5H12V13.5H5.5V16Z" fill="url(#gorange)" stroke="#c05a20" stroke-width="0.6"/></svg>
<svg style="position:absolute;left:41px;top:327px;" width="17" height="17" viewBox="0 0 17 17"><path d="M0 7H5L6 9V14H0Z" fill="#f0c020" stroke="#8a6a10" stroke-width="0.6"/><path d="M1 8H4V10H1Z" fill="#6ab0e0"/><path d="M6 4H16V14H6Z" fill="#d8d8d8" stroke="#888" stroke-width="0.6"/><circle cx="3" cy="14.5" r="1.6" fill="#333"/><circle cx="12.5" cy="14.5" r="1.6" fill="#333"/><path d="M12 0V7M8.5 3.5H15.5" stroke="#2ab02a" stroke-width="2.6"/></svg>
<svg style="position:absolute;left:41px;top:345px;" width="17" height="17" viewBox="0 0 17 17"><path d="M1 8L6 2H14V13H6Z" fill="#ece4d8" stroke="#8a7a68" stroke-width="0.8"/><circle cx="11" cy="11" r="4" fill="#fff" opacity="0"/><path d="M11 8V16M7 12H15" stroke="#e04020" stroke-width="2.4"/></svg>
<svg style="position:absolute;left:41px;top:363px;" width="17" height="17" viewBox="0 0 17 17"><path d="M1 1H16V15H1Z" fill="#fff" stroke="#7a8aa0" stroke-width="0.8"/><path d="M1 1H16V4H1Z" fill="#3a78c8"/><path d="M3 6H5V8H3ZM3 10H5V12H3Z" fill="#4ab04a"/><path d="M7 7H14M7 11H14" stroke="#555" stroke-width="0.9"/></svg>
<svg style="position:absolute;left:23px;top:381px;" width="17" height="17" viewBox="0 0 17 17"><path d="M1 10L7 6H16L12 13H2Z" fill="#d0d6dc" stroke="#6a7480" stroke-width="0.7"/><path d="M8 3L13 1L15 6L10 7Z" fill="#f0d040" stroke="#8a7020" stroke-width="0.6"/><path d="M3 11L11 11" stroke="#889" stroke-width="0.8"/></svg>
<svg style="position:absolute;left:23px;top:399px;" width="17" height="17" viewBox="0 0 17 17"><path d="M5 5H11V14H5Z" fill="#fff" stroke="#888" stroke-width="0.7"/><path d="M4 9L7 12L12 4" stroke="#e03020" stroke-width="1.6" fill="none"/><path d="M6 2L9 5" stroke="#c08030" stroke-width="1"/></svg>
<svg style="position:absolute;left:23px;top:417px;" width="17" height="17" viewBox="0 0 17 17"><path d="M4 2H15L12 14H1Z" fill="#2a6ed8" stroke="#1a4a98" stroke-width="0.7"/><path d="M1 14H12L12 15H1Z" fill="#fff"/><path d="M1 14L3 15" stroke="#3aa03a" stroke-width="1.4"/></svg>
<svg style="position:absolute;left:23px;top:435px;" width="17" height="17" viewBox="0 0 17 17"><path d="M2 3L13 1L15 10L4 12Z" fill="#f4f8ff" stroke="#2a60c0" stroke-width="1"/><path d="M5 6L8 9L12 3" stroke="#2a60c0" stroke-width="1.3" fill="none"/><path d="M1 11L15 9L15 12L2 14Z" fill="#2a5ab8"/></svg>
<svg style="position:absolute;left:23px;top:453px;" width="17" height="17" viewBox="0 0 17 17"><path d="M1 2H15V13H1Z" fill="#f0f6ff" stroke="#3a70c0" stroke-width="0.8"/><path d="M1 2H15V4H1Z" fill="#3a70c0"/><path d="M3 6H8V10H3Z" fill="#fff" stroke="#6a8ac0" stroke-width="0.6"/><path d="M12 7L9 11H11L9 15L15 10H12.5L14 7Z" fill="#f0b020" stroke="#a07010" stroke-width="0.4"/></svg>
<svg style="position:absolute;left:23px;top:471px;" width="17" height="17" viewBox="0 0 17 17"><path d="M1 2H9V15H1Z" fill="#5aa0d8" stroke="#2a6aa8" stroke-width="0.7"/><path d="M9 6H16V12H9Z" fill="#3a80c0" stroke="#2a6aa8" stroke-width="0.7"/><path d="M3 4V13M6 4V13" stroke="#b8dcf8" stroke-width="0.8"/></svg>
<svg style="position:absolute;left:23px;top:489px;" width="17" height="17" viewBox="0 0 17 17"><path d="M2 9L10 3L15 6L7 13Z" fill="#fff" stroke="#333" stroke-width="0.9"/><path d="M2 9L2 12L7 15L15 9V6" fill="#2a5090" stroke="#222" stroke-width="0.6"/><path d="M10 1Q13 0 13 4" stroke="#333" stroke-width="0.9" fill="none"/></svg>
<svg style="position:absolute;left:23px;top:507px;" width="17" height="17" viewBox="0 0 17 17"><circle cx="8" cy="4.5" r="3.2" fill="#f0c8a0" stroke="#7a5a40" stroke-width="0.6"/><path d="M5 3Q8 0 11 3" stroke="#333" stroke-width="1.4" fill="none"/><path d="M2 16Q2 9 8 9Q14 9 14 16Z" fill="#2a3a6a" stroke="#1a2040" stroke-width="0.6"/><path d="M7 9.5L8 13L9 9.5Z" fill="#fff"/></svg>
<div style="position:absolute;left:517px;top:193px;width:978px;height:566px;background:#f0f0f0;border:1px solid #1a86e8;box-sizing:border-box;box-shadow:0 0 14px 2px rgba(0,0,0,0.28)"></div>
<div style="position:absolute;left:518px;top:193px;width:976px;height:31px;background:#0084ee"></div>
<div class="t" style="left:547.50px;top:201.24px;font-size:12px;color:#fff;font-weight:400;transform:scaleX(0.9499);">Yeni Kayıt (Fiyat Talep Fişi)</div>
<div style="position:absolute;left:1375px;top:208px;width:10px;height:1px;background:#fff"></div>
<div style="position:absolute;left:1420px;top:203px;width:10px;height:10px;border:1px solid #fff;box-sizing:border-box"></div>
<svg style="position:absolute;left:1465px;top:202px;" width="12" height="12" viewBox="0 0 12 12"><path d="M1 1L11 11M11 1L1 11" stroke="#fff" stroke-width="1.1"/></svg>
<div style="position:absolute;left:521px;top:194px;width:190px;height:29px;border:3px solid #ff0000;box-sizing:border-box;border-radius:3px"></div>
<div style="position:absolute;left:518px;top:224px;width:976px;height:18px;background:#fff"></div>
<div class="t" style="left:525.00px;top:226.34px;font-size:12px;color:#000;font-weight:400;transform:scaleX(0.9394);">Kayıt</div>
<div class="t" style="left:565.00px;top:226.34px;font-size:12px;color:#000;font-weight:400;transform:scaleX(0.9869);">İlgili Kayıtlar</div>
<div class="t" style="left:643.50px;top:226.34px;font-size:12px;color:#000;font-weight:400;transform:scaleX(0.9037);">Yazdır</div>
<div class="t" style="left:690.70px;top:226.34px;font-size:12px;color:#000;font-weight:400;transform:scaleX(0.9714);">Şablonlar</div>
<div class="t" style="left:754.00px;top:226.34px;font-size:12px;color:#000;font-weight:400;transform:scaleX(0.9630);">Hesaplama</div>
<div class="t" style="left:827.40px;top:226.34px;font-size:12px;color:#000;font-weight:400;transform:scaleX(0.9313);">Görev</div>
<div style="position:absolute;left:518px;top:242px;width:976px;height:40px;background:#f0f0f0"></div>
<div style="position:absolute;left:518px;top:282px;width:976px;height:1px;background:#a0a0a0"></div>
<div style="position:absolute;left:522px;top:245px;width:2px;height:2px;background:#a8a8a8;border-radius:1px"></div>
<div style="position:absolute;left:522px;top:249px;width:2px;height:2px;background:#a8a8a8;border-radius:1px"></div>
<div style="position:absolute;left:522px;top:253px;width:2px;height:2px;background:#a8a8a8;border-radius:1px"></div>
<div style="position:absolute;left:522px;top:257px;width:2px;height:2px;background:#a8a8a8;border-radius:1px"></div>
<div style="position:absolute;left:522px;top:261px;width:2px;height:2px;background:#a8a8a8;border-radius:1px"></div>
<div style="position:absolute;left:522px;top:265px;width:2px;height:2px;background:#a8a8a8;border-radius:1px"></div>
<div style="position:absolute;left:522px;top:269px;width:2px;height:2px;background:#a8a8a8;border-radius:1px"></div>
<div style="position:absolute;left:522px;top:273px;width:2px;height:2px;background:#a8a8a8;border-radius:1px"></div>
<div style="position:absolute;left:522px;top:277px;width:2px;height:2px;background:#a8a8a8;border-radius:1px"></div>
<div class="t" style="left:648.00px;top:254.84px;font-size:12px;color:#000;font-weight:400;transform:scaleX(0.9664);">Kaydet</div>
<div class="t" style="left:770.70px;top:254.84px;font-size:12px;color:#000;font-weight:400;transform:scaleX(0.9696);">Yeni</div>
<div class="t" style="left:840.00px;top:254.84px;font-size:12px;color:#a8a8a8;font-weight:400;transform:scaleX(0.8151);">Sil</div>
<div style="position:absolute;left:522px;top:309px;width:966px;height:116px;background:#fff;border:1px solid #d9d9d9;box-sizing:border-box"></div>
<div style="position:absolute;left:593px;top:289px;width:54px;height:21px;background:#f0f0f0;border:1px solid #d9d9d9;box-sizing:border-box"></div>
<div class="t" style="left:598.40px;top:292.84px;font-size:12px;color:#000;font-weight:400;transform:scaleX(0.9430);">Detaylar</div>
<div style="position:absolute;left:646px;top:289px;width:49px;height:21px;background:#f0f0f0;border:1px solid #d9d9d9;box-sizing:border-box"></div>
<div class="t" style="left:653.30px;top:292.84px;font-size:12px;color:#000;font-weight:400;transform:scaleX(1.0156);">Notlar</div>
<div style="position:absolute;left:694px;top:289px;width:56px;height:21px;background:#f0f0f0;border:1px solid #d9d9d9;box-sizing:border-box"></div>
<div class="t" style="left:701.30px;top:292.84px;font-size:12px;color:#000;font-weight:400;transform:scaleX(0.9436);">Sevkiyat</div>
<div style="position:absolute;left:749px;top:289px;width:78px;height:21px;background:#f0f0f0;border:1px solid #d9d9d9;box-sizing:border-box"></div>
<div class="t" style="left:756.30px;top:292.84px;font-size:12px;color:#000;font-weight:400;transform:scaleX(0.9483);">Belge Dövizi</div>
<div style="position:absolute;left:826px;top:289px;width:46px;height:21px;background:#f0f0f0;border:1px solid #d9d9d9;box-sizing:border-box"></div>
<div class="t" style="left:831.90px;top:292.84px;font-size:12px;color:#000;font-weight:400;transform:scaleX(0.9528);">Belge</div>
<div style="position:absolute;left:522px;top:287px;width:72px;height:23px;background:#fff;border:1px solid #d9d9d9;border-bottom:none;box-sizing:border-box"></div>
<div class="t" style="left:530.00px;top:290.34px;font-size:12px;color:#000;font-weight:400;transform:scaleX(0.9603);">Fiş Bilgileri</div>
<div class="t" style="left:530.10px;top:316.64px;font-size:12px;color:#000;font-weight:400;transform:scaleX(0.9901);">Talep Tarihi</div>
<div class="t" style="left:530.10px;top:340.84px;font-size:12px;color:#000;font-weight:400;transform:scaleX(0.9874);">Talep No</div>
<div class="t" style="left:530.10px;top:364.84px;font-size:12px;color:#000;font-weight:400;transform:scaleX(0.9926);">Tedarikçi</div>
<div class="t" style="left:530.10px;top:388.34px;font-size:12px;color:#000;font-weight:400;transform:scaleX(0.9417);">Cari Hesap</div>
<div class="t" style="left:726.40px;top:316.64px;font-size:12px;color:#000;font-weight:400;transform:scaleX(0.9661);">Düzenleme Zamanı</div>
<div class="t" style="left:975.20px;top:316.84px;font-size:12px;color:#000;font-weight:400;transform:scaleX(0.9661);">İş Birimi</div>
<div class="t" style="left:975.20px;top:339.84px;font-size:12px;color:#000;font-weight:400;transform:scaleX(1.0156);">Ambar</div>
<div class="t" style="left:975.20px;top:363.14px;font-size:12px;color:#000;font-weight:400;transform:scaleX(0.9889);">Org. Birim</div>
<div class="t" style="left:975.20px;top:385.84px;font-size:12px;color:#000;font-weight:400;transform:scaleX(0.9614);">Ödeme Planı</div>
<div class="t" style="left:1267.40px;top:319.64px;font-size:12px;color:#000;font-weight:400;transform:scaleX(0.9717);">Talep Türü</div>
<div class="t" style="left:1267.40px;top:345.34px;font-size:12px;color:#000;font-weight:400;transform:scaleX(1.0129);">Durumu</div>
<div class="t" style="left:1267.40px;top:368.84px;font-size:12px;color:#000;font-weight:400;transform:scaleX(0.9684);">Yetki Kodu</div>
<div class="t" style="left:1267.40px;top:392.14px;font-size:12px;color:#000;font-weight:400;transform:scaleX(0.9291);">Personel</div>
<div style="position:absolute;left:598px;top:315px;width:120px;height:20px;background:#fff;border:1px solid #a9a9a9;box-sizing:border-box"></div>
<div style="position:absolute;left:599px;top:316px;width:101px;height:18px;background:#fcdcdc"></div>
<div style="position:absolute;left:603px;top:318px;width:12px;height:14px;background:#0078d7"></div>
<div class="t" style="left:602.90px;top:316.84px;font-size:12px;color:#fff;font-weight:400;transform:scaleX(0.9000);">06</div>
<div class="t" style="left:615.00px;top:316.84px;font-size:12px;color:#000;font-weight:400;transform:scaleX(0.9000);">.11.2018 09:12</div>
<div style="position:absolute;left:700px;top:317px;width:16px;height:16px;box-sizing:border-box;border:1px solid #3d7bbf;border-radius:2px;background:linear-gradient(#e4efff,#b9d3f5)"></div>
<svg style="position:absolute;left:703px;top:322px;" width="10" height="7" viewBox="0 0 10 7"><path d="M1 1L5 5L9 1" stroke="#0f1f5a" stroke-width="2" fill="none"/></svg>
<div style="position:absolute;left:836px;top:315px;width:120px;height:20px;background:#fff;border:1px solid #a9a9a9;box-sizing:border-box"></div>
<div class="t" style="left:840.90px;top:316.84px;font-size:12px;color:#000;font-weight:400;transform:scaleX(0.9114);">06.11.2018 09:12</div>
<div style="position:absolute;left:938px;top:317px;width:16px;height:16px;box-sizing:border-box;border:1px solid #3d7bbf;border-radius:2px;background:linear-gradient(#e4efff,#b9d3f5)"></div>
<svg style="position:absolute;left:941px;top:322px;" width="10" height="7" viewBox="0 0 10 7"><path d="M1 1L5 5L9 1" stroke="#0f1f5a" stroke-width="2" fill="none"/></svg>
<div style="position:absolute;left:598px;top:338px;width:323px;height:21px;background:#f0f0f0;border:1px solid #cfcfcf;box-sizing:border-box"></div>
<div class="t" style="left:604.10px;top:340.84px;font-size:12px;color:#6d6d6d;font-weight:400;transform:scaleX(0.9059);">SAFT.0012</div>
<svg style="position:absolute;left:948px;top:347px;" width="7" height="4" viewBox="0 0 7 4"><path d="M0 0H7L3.5 4Z" fill="#222"/></svg>
<div style="position:absolute;left:598px;top:363px;width:361px;height:20px;background:#fff;border:1px solid #a9a9a9;box-sizing:border-box"></div>
<div style="position:absolute;left:907px;top:365px;width:15px;height:15px;box-sizing:border-box;border:1px solid #5a6a8a;border-radius:2px;background:linear-gradient(#e3eefc 0,#d3e4fa 6px,#b9d7fa 6px,#b3d4f9 100%)"></div>
<div style="position:absolute;left:910px;top:375px;width:2px;height:2px;background:#0a1440"></div>
<div style="position:absolute;left:914px;top:375px;width:2px;height:2px;background:#0a1440"></div>
<div style="position:absolute;left:918px;top:375px;width:2px;height:2px;background:#0a1440"></div>
<div style="position:absolute;left:924px;top:365px;width:15px;height:15px;box-sizing:border-box;border:1px solid #5a6a8a;border-radius:2px;background:linear-gradient(#e3eefc 0,#d3e4fa 6px,#b9d7fa 6px,#b3d4f9 100%)"></div>
<svg style="position:absolute;left:926px;top:367px;" width="12" height="12" viewBox="0 0 12 12"><path d="M2 11L8 5" stroke="#222" stroke-width="2"/><path d="M9 1l1 2 2 1-2 1-1 2-1-2-2-1 2-1z" fill="#f2b600"/></svg>
<div style="position:absolute;left:941px;top:365px;width:15px;height:15px;box-sizing:border-box;border:1px solid #7a7a7a;border-radius:2px;background:linear-gradient(#f6f6f6,#e4e4e4)"></div>
<svg style="position:absolute;left:944px;top:369px;" width="10" height="8" viewBox="0 0 10 8"><rect x="0.5" y="0.5" width="9" height="7" fill="#fff" stroke="#6a8ac8"/><rect x="0.5" y="0.5" width="9" height="2" fill="#6a8ac8"/><path d="M2 5h6" stroke="#aaa" stroke-dasharray="1 1"/></svg>
<div style="position:absolute;left:598px;top:386px;width:361px;height:20px;background:#fff;border:1px solid #a9a9a9;box-sizing:border-box"></div>
<div style="position:absolute;left:924px;top:388px;width:15px;height:15px;box-sizing:border-box;border:1px solid #5a6a8a;border-radius:2px;background:linear-gradient(#e3eefc 0,#d3e4fa 6px,#b9d7fa 6px,#b3d4f9 100%)"></div>
<div style="position:absolute;left:927px;top:398px;width:2px;height:2px;background:#0a1440"></div>
<div style="position:absolute;left:931px;top:398px;width:2px;height:2px;background:#0a1440"></div>
<div style="position:absolute;left:935px;top:398px;width:2px;height:2px;background:#0a1440"></div>
<div style="position:absolute;left:941px;top:388px;width:15px;height:15px;box-sizing:border-box;border:1px solid #7a7a7a;border-radius:2px;background:linear-gradient(#f6f6f6,#e4e4e4)"></div>
<svg style="position:absolute;left:944px;top:392px;" width="10" height="8" viewBox="0 0 10 8"><rect x="0.5" y="0.5" width="9" height="7" fill="#fff" stroke="#6a8ac8"/><rect x="0.5" y="0.5" width="9" height="2" fill="#6a8ac8"/><path d="M2 5h6" stroke="#aaa" stroke-dasharray="1 1"/></svg>
<div style="position:absolute;left:1051px;top:315px;width:200px;height:20px;background:#fff;border:1px solid #a9a9a9;box-sizing:border-box"></div>
<div style="position:absolute;left:1216px;top:317px;width:15px;height:15px;box-sizing:border-box;border:1px solid #5a6a8a;border-radius:2px;background:linear-gradient(#e3eefc 0,#d3e4fa 6px,#b9d7fa 6px,#b3d4f9 100%)"></div>
<div style="position:absolute;left:1219px;top:327px;width:2px;height:2px;background:#0a1440"></div>
<div style="position:absolute;left:1223px;top:327px;width:2px;height:2px;background:#0a1440"></div>
<div style="position:absolute;left:1227px;top:327px;width:2px;height:2px;background:#0a1440"></div>
<div style="position:absolute;left:1233px;top:317px;width:15px;height:15px;box-sizing:border-box;border:1px solid #5a6a8a;border-radius:2px;background:linear-gradient(#e3eefc 0,#d3e4fa 6px,#b9d7fa 6px,#b3d4f9 100%)"></div>
<svg style="position:absolute;left:1236px;top:321px;" width="10" height="8" viewBox="0 0 10 8"><rect x="0.5" y="0.5" width="9" height="7" fill="#fff" stroke="#6a8ac8"/><rect x="0.5" y="0.5" width="9" height="2" fill="#6a8ac8"/><path d="M2 5h6" stroke="#aaa" stroke-dasharray="1 1"/></svg>
<div style="position:absolute;left:1051px;top:338px;width:200px;height:20px;background:#fff;border:1px solid #a9a9a9;box-sizing:border-box"></div>
<div style="position:absolute;left:1216px;top:340px;width:15px;height:15px;box-sizing:border-box;border:1px solid #5a6a8a;border-radius:2px;background:linear-gradient(#e3eefc 0,#d3e4fa 6px,#b9d7fa 6px,#b3d4f9 100%)"></div>
<div style="position:absolute;left:1219px;top:350px;width:2px;height:2px;background:#0a1440"></div>
<div style="position:absolute;left:1223px;top:350px;width:2px;height:2px;background:#0a1440"></div>
<div style="position:absolute;left:1227px;top:350px;width:2px;height:2px;background:#0a1440"></div>
<div style="position:absolute;left:1233px;top:340px;width:15px;height:15px;box-sizing:border-box;border:1px solid #5a6a8a;border-radius:2px;background:linear-gradient(#e3eefc 0,#d3e4fa 6px,#b9d7fa 6px,#b3d4f9 100%)"></div>
<svg style="position:absolute;left:1236px;top:344px;" width="10" height="8" viewBox="0 0 10 8"><rect x="0.5" y="0.5" width="9" height="7" fill="#fff" stroke="#6a8ac8"/><rect x="0.5" y="0.5" width="9" height="2" fill="#6a8ac8"/><path d="M2 5h6" stroke="#aaa" stroke-dasharray="1 1"/></svg>
<div style="position:absolute;left:1051px;top:361px;width:200px;height:20px;background:#fff;border:1px solid #a9a9a9;box-sizing:border-box"></div>
<div style="position:absolute;left:1216px;top:363px;width:15px;height:15px;box-sizing:border-box;border:1px solid #5a6a8a;border-radius:2px;background:linear-gradient(#e3eefc 0,#d3e4fa 6px,#b9d7fa 6px,#b3d4f9 100%)"></div>
<div style="position:absolute;left:1219px;top:373px;width:2px;height:2px;background:#0a1440"></div>
<div style="position:absolute;left:1223px;top:373px;width:2px;height:2px;background:#0a1440"></div>
<div style="position:absolute;left:1227px;top:373px;width:2px;height:2px;background:#0a1440"></div>
<div style="position:absolute;left:1233px;top:363px;width:15px;height:15px;box-sizing:border-box;border:1px solid #7a7a7a;border-radius:2px;background:linear-gradient(#f6f6f6,#e4e4e4)"></div>
<svg style="position:absolute;left:1236px;top:367px;" width="10" height="8" viewBox="0 0 10 8"><rect x="0.5" y="0.5" width="9" height="7" fill="#fff" stroke="#6a8ac8"/><rect x="0.5" y="0.5" width="9" height="2" fill="#6a8ac8"/><path d="M2 5h6" stroke="#aaa" stroke-dasharray="1 1"/></svg>
<div style="position:absolute;left:1051px;top:384px;width:200px;height:20px;background:#fff;border:1px solid #a9a9a9;box-sizing:border-box"></div>
<div style="position:absolute;left:1216px;top:386px;width:15px;height:15px;box-sizing:border-box;border:1px solid #5a6a8a;border-radius:2px;background:linear-gradient(#e3eefc 0,#d3e4fa 6px,#b9d7fa 6px,#b3d4f9 100%)"></div>
<div style="position:absolute;left:1219px;top:396px;width:2px;height:2px;background:#0a1440"></div>
<div style="position:absolute;left:1223px;top:396px;width:2px;height:2px;background:#0a1440"></div>
<div style="position:absolute;left:1227px;top:396px;width:2px;height:2px;background:#0a1440"></div>
<div style="position:absolute;left:1233px;top:386px;width:15px;height:15px;box-sizing:border-box;border:1px solid #7a7a7a;border-radius:2px;background:linear-gradient(#f6f6f6,#e4e4e4)"></div>
<svg style="position:absolute;left:1236px;top:390px;" width="10" height="8" viewBox="0 0 10 8"><rect x="0.5" y="0.5" width="9" height="7" fill="#fff" stroke="#6a8ac8"/><rect x="0.5" y="0.5" width="9" height="2" fill="#6a8ac8"/><path d="M2 5h6" stroke="#aaa" stroke-dasharray="1 1"/></svg>
<div style="position:absolute;left:1052px;top:316px;width:164px;height:18px;overflow:hidden">
<div class="t" style="left:4.30px;top:0.84px;font-size:12px;color:#000;font-weight:400;transform:scaleX(0.9900);">1 - İç Anadolu Bölgesi [İç Anadolu]</div>
</div>
<div style="position:absolute;left:1216px;top:317px;width:15px;height:15px;box-sizing:border-box;border:1px solid #5a6a8a;border-radius:2px;background:linear-gradient(#e3eefc 0,#d3e4fa 6px,#b9d7fa 6px,#b3d4f9 100%)"></div>
<div style="position:absolute;left:1219px;top:327px;width:2px;height:2px;background:#0a1440"></div>
<div style="position:absolute;left:1223px;top:327px;width:2px;height:2px;background:#0a1440"></div>
<div style="position:absolute;left:1227px;top:327px;width:2px;height:2px;background:#0a1440"></div>
<div class="t" style="left:1056.30px;top:339.84px;font-size:12px;color:#000;font-weight:400;transform:scaleX(0.9526);">Ankara</div>
<div style="position:absolute;left:1331px;top:315px;width:143px;height:23px;background:#cccccc;border:1px solid #c4c4c4;box-sizing:border-box"></div>
<div class="t" style="left:1335.20px;top:319.64px;font-size:12px;color:#6d6d6d;font-weight:400;transform:scaleX(0.9619);">Satınalma Fiyat Talebi</div>
<svg style="position:absolute;left:1460px;top:323px;" width="10" height="6" viewBox="0 0 10 6"><path d="M1 1L5 5L9 1" stroke="#a0a0a0" stroke-width="1" fill="none"/></svg>
<div style="position:absolute;left:1331px;top:341px;width:143px;height:23px;background:#e1e1e1;border:1px solid #adadad;box-sizing:border-box"></div>
<div class="t" style="left:1335.20px;top:345.34px;font-size:12px;color:#000;font-weight:400;transform:scaleX(0.9583);">Onaylı</div>
<svg style="position:absolute;left:1460px;top:349px;" width="10" height="6" viewBox="0 0 10 6"><path d="M1 1L5 5L9 1" stroke="#333" stroke-width="1" fill="none"/></svg>
<div style="position:absolute;left:1331px;top:367px;width:143px;height:20px;background:#fff;border:1px solid #a9a9a9;box-sizing:border-box"></div>
<div style="position:absolute;left:1439px;top:369px;width:15px;height:15px;box-sizing:border-box;border:1px solid #5a6a8a;border-radius:2px;background:linear-gradient(#e3eefc 0,#d3e4fa 6px,#b9d7fa 6px,#b3d4f9 100%)"></div>
<div style="position:absolute;left:1442px;top:379px;width:2px;height:2px;background:#0a1440"></div>
<div style="position:absolute;left:1446px;top:379px;width:2px;height:2px;background:#0a1440"></div>
<div style="position:absolute;left:1450px;top:379px;width:2px;height:2px;background:#0a1440"></div>
<div style="position:absolute;left:1456px;top:369px;width:15px;height:15px;box-sizing:border-box;border:1px solid #7a7a7a;border-radius:2px;background:linear-gradient(#f6f6f6,#e4e4e4)"></div>
<svg style="position:absolute;left:1459px;top:373px;" width="10" height="8" viewBox="0 0 10 8"><rect x="0.5" y="0.5" width="9" height="7" fill="#fff" stroke="#6a8ac8"/><rect x="0.5" y="0.5" width="9" height="2" fill="#6a8ac8"/><path d="M2 5h6" stroke="#aaa" stroke-dasharray="1 1"/></svg>
<div style="position:absolute;left:1331px;top:390px;width:143px;height:20px;background:#fff;border:1px solid #a9a9a9;box-sizing:border-box"></div>
<div style="position:absolute;left:1439px;top:392px;width:15px;height:15px;box-sizing:border-box;border:1px solid #5a6a8a;border-radius:2px;background:linear-gradient(#e3eefc 0,#d3e4fa 6px,#b9d7fa 6px,#b3d4f9 100%)"></div>
<div style="position:absolute;left:1442px;top:402px;width:2px;height:2px;background:#0a1440"></div>
<div style="position:absolute;left:1446px;top:402px;width:2px;height:2px;background:#0a1440"></div>
<div style="position:absolute;left:1450px;top:402px;width:2px;height:2px;background:#0a1440"></div>
<div style="position:absolute;left:1456px;top:392px;width:15px;height:15px;box-sizing:border-box;border:1px solid #7a7a7a;border-radius:2px;background:linear-gradient(#f6f6f6,#e4e4e4)"></div>
<svg style="position:absolute;left:1459px;top:396px;" width="10" height="8" viewBox="0 0 10 8"><rect x="0.5" y="0.5" width="9" height="7" fill="#fff" stroke="#6a8ac8"/><rect x="0.5" y="0.5" width="9" height="2" fill="#6a8ac8"/><path d="M2 5h6" stroke="#aaa" stroke-dasharray="1 1"/></svg>
<div style="position:absolute;left:522px;top:429px;width:927px;height:226px;background:#fff"></div>
<div style="position:absolute;left:522px;top:429px;width:927px;height:22px;background:linear-gradient(#deeafb 0,#d6e5fa 8px,#b8d5f9 8px,#b5d3f8 22px)"></div>
<div style="position:absolute;left:522px;top:451px;width:927px;height:1px;background:#d0d8e4"></div>
<div style="position:absolute;left:522px;top:452px;width:24px;height:22px;background:#d6e6fb"></div>
<div style="position:absolute;left:546px;top:452px;width:99px;height:22px;background:#5f9bcb"></div>
<div style="position:absolute;left:522px;top:474px;width:927px;height:1px;background:#dcdcdc"></div>
<div style="position:absolute;left:545px;top:429px;width:1px;height:45px;background:#d4d7dd"></div>
<div style="position:absolute;left:645px;top:429px;width:1px;height:45px;background:#d4d7dd"></div>
<div style="position:absolute;left:805px;top:429px;width:1px;height:45px;background:#d4d7dd"></div>
<div style="position:absolute;left:985px;top:429px;width:1px;height:45px;background:#d4d7dd"></div>
<div style="position:absolute;left:1105px;top:429px;width:1px;height:45px;background:#d4d7dd"></div>
<div style="position:absolute;left:1185px;top:429px;width:1px;height:45px;background:#d4d7dd"></div>
<div style="position:absolute;left:1325px;top:429px;width:1px;height:45px;background:#d4d7dd"></div>
<svg style="position:absolute;left:532px;top:458px;" width="7" height="12" viewBox="0 0 7 12"><path d="M0 0L6.5 5.5L0 11Z" fill="#000"/></svg>
<div class="t" style="left:550.50px;top:433.14px;font-size:12px;color:#000;font-weight:700;transform:scaleX(0.9558);">Tür</div>
<div class="t" style="left:649.80px;top:433.14px;font-size:12px;color:#000;font-weight:700;transform:scaleX(0.9512);">Satır Öğesi</div>
<div class="t" style="left:810.20px;top:433.14px;font-size:12px;color:#000;font-weight:700;transform:scaleX(0.9901);">Ürün/Hizmet Açıklaması</div>
<div class="t" style="left:990.00px;top:433.14px;font-size:12px;color:#000;font-weight:700;transform:scaleX(1.0152);">Birim/Paket</div>
<div class="t" style="left:1148.10px;top:433.14px;font-size:12px;color:#000;font-weight:700;transform:scaleX(1.0468);">Miktar</div>
<div class="t" style="left:1265.90px;top:433.14px;font-size:12px;color:#000;font-weight:700;transform:scaleX(0.9500);">Birim Fiyat</div>
<div class="t" style="left:552.30px;top:455.64px;font-size:12px;color:#fff;font-weight:400;transform:scaleX(1.0247);">Ürün/Hizmet</div>
<div class="t" style="left:1178.60px;top:455.64px;font-size:12px;color:#000;font-weight:400;transform:scaleX(0.8000);">0</div>
<div class="t" style="left:1302.80px;top:455.64px;font-size:12px;color:#000;font-weight:400;transform:scaleX(0.9161);">0,00</div>
<div style="position:absolute;left:1449px;top:429px;width:17px;height:226px;background:#f0f0f0"></div>
<svg style="position:absolute;left:1453px;top:435px;" width="10" height="7" viewBox="0 0 10 7"><path d="M1 6L5 2L9 6" stroke="#b8b8b8" stroke-width="1.2" fill="none"/></svg>
<svg style="position:absolute;left:1453px;top:642px;" width="10" height="7" viewBox="0 0 10 7"><path d="M1 1L5 5L9 1" stroke="#b8b8b8" stroke-width="1.2" fill="none"/></svg>
<div style="position:absolute;left:1466px;top:429px;width:24px;height:245px;background:#fff"></div>
<div style="position:absolute;left:1469px;top:519px;width:19px;height:1px;background:#9a9a9a"></div>
<div style="position:absolute;left:1469px;top:593px;width:19px;height:1px;background:#9a9a9a"></div>
<div style="position:absolute;left:522px;top:655px;width:944px;height:17px;background:#f0f0f0"></div>
<div style="position:absolute;left:539px;top:656px;width:468px;height:15px;background:#cdcdcd"></div>
<svg style="position:absolute;left:526px;top:659px;" width="7" height="10" viewBox="0 0 7 10"><path d="M5.5 1L1.5 5L5.5 9" stroke="#555" stroke-width="1.6" fill="none"/></svg>
<svg style="position:absolute;left:1437px;top:659px;" width="7" height="10" viewBox="0 0 7 10"><path d="M1.5 1L5.5 5L1.5 9" stroke="#555" stroke-width="1.6" fill="none"/></svg>
<div style="position:absolute;left:522px;top:672px;width:968px;height:82px;background:#fff"></div>
<div style="position:absolute;left:525px;top:672px;width:45px;height:21px;border:1px solid #a6a6a6;border-bottom:none;border-radius:0 3px 0 0;background:#fff;box-sizing:border-box"></div>
<div style="position:absolute;left:570px;top:691px;width:476px;height:1px;background:#a6a6a6"></div>
<div class="t" style="left:529.30px;top:675.14px;font-size:12px;color:#000;font-weight:400;transform:scaleX(0.9553);">Barkod</div>
<div style="position:absolute;left:525px;top:693px;width:521px;height:21px;border:1px solid #7a7a7a;box-sizing:border-box;background:#fff"></div>
<div class="t" style="left:1054.20px;top:678.24px;font-size:12px;color:#000;font-weight:400;transform:scaleX(0.9346);">Hesaplan KDV</div>
<div style="position:absolute;left:1146px;top:678px;width:110px;height:15px;background:#f0f0f0"></div>
<div class="t" style="left:1229.00px;top:678.24px;font-size:12px;color:#000;font-weight:700;transform:scaleX(1.0194);">0,00</div>
<div class="t" style="left:1054.20px;top:696.24px;font-size:12px;color:#000;font-weight:400;transform:scaleX(0.9975);">Toplam Masraf</div>
<div style="position:absolute;left:1146px;top:696px;width:110px;height:15px;background:#f0f0f0"></div>
<div class="t" style="left:1229.00px;top:696.24px;font-size:12px;color:#000;font-weight:700;transform:scaleX(1.0194);">0,00</div>
<div class="t" style="left:1054.20px;top:714.24px;font-size:12px;color:#000;font-weight:400;transform:scaleX(0.9660);">Toplam Ek Vergi</div>
<div style="position:absolute;left:1146px;top:714px;width:110px;height:15px;background:#f0f0f0"></div>
<div class="t" style="left:1229.00px;top:714.24px;font-size:12px;color:#000;font-weight:700;transform:scaleX(1.0194);">0,00</div>
<div class="t" style="left:1054.20px;top:732.24px;font-size:12px;color:#000;font-weight:400;transform:scaleX(0.8758);">Satır Sayısı</div>
<div style="position:absolute;left:1146px;top:732px;width:110px;height:15px;background:#f0f0f0"></div>
<div class="t" style="left:1247.80px;top:732.24px;font-size:12px;color:#000;font-weight:700;transform:scaleX(0.6815);">1</div>
<div class="t" style="left:1264.70px;top:678.24px;font-size:12px;color:#000;font-weight:400;transform:scaleX(1.0101);">Toplam Tutar</div>
<div style="position:absolute;left:1356px;top:678px;width:110px;height:15px;background:#f0f0f0"></div>
<div class="t" style="left:1439.20px;top:678.24px;font-size:12px;color:#000;font-weight:700;transform:scaleX(1.0151);">0,00</div>
<div class="t" style="left:1264.70px;top:696.24px;font-size:12px;color:#000;font-weight:400;transform:scaleX(1.0231);">Toplam İndirim</div>
<div style="position:absolute;left:1356px;top:696px;width:110px;height:15px;background:#f0f0f0"></div>
<div class="t" style="left:1439.20px;top:696.24px;font-size:12px;color:#000;font-weight:700;transform:scaleX(1.0151);">0,00</div>
<div class="t" style="left:1264.70px;top:714.24px;font-size:12px;color:#000;font-weight:400;transform:scaleX(0.9743);">Ödenecek Tutar</div>
<div style="position:absolute;left:1356px;top:714px;width:110px;height:15px;background:#f0f0f0"></div>
<div class="t" style="left:1439.20px;top:714.24px;font-size:12px;color:#000;font-weight:700;transform:scaleX(1.0151);">0,00</div>
<svg width="0" height="0" style="position:absolute"><defs>
<radialGradient id="gcirc" cx="0.45" cy="0.35" r="0.75"><stop offset="0" stop-color="#e4e4e4"/><stop offset="0.7" stop-color="#a8a8a8"/><stop offset="1" stop-color="#8a8a8a"/></radialGradient>
<linearGradient id="gfloppy" x1="0" y1="0" x2="1" y2="0"><stop offset="0" stop-color="#3d6fc0"/><stop offset="0.5" stop-color="#5b8ad6"/><stop offset="1" stop-color="#3a66b5"/></linearGradient>
<linearGradient id="gtrash" x1="0" y1="0" x2="1" y2="0"><stop offset="0" stop-color="#8a8a8a"/><stop offset="0.5" stop-color="#d8d8d8"/><stop offset="1" stop-color="#7a7a7a"/></linearGradient>
<linearGradient id="gcheck" x1="0" y1="0" x2="0" y2="1"><stop offset="0" stop-color="#ff7a6a"/><stop offset="1" stop-color="#d02818"/></linearGradient>
</defs></svg>
<svg style="position:absolute;left:522px;top:197px;" width="20" height="20" viewBox="0 0 20 20"><path d="M4.3 11.5L10 5.3H16V12.5H10Z" fill="#fdf1e6" stroke="#a88a6a" stroke-width="0.9"/><circle cx="12.6" cy="8.6" r="1.4" fill="#fff" stroke="#7a7a7a" stroke-width="0.9"/><path d="M16 6.5Q19.5 5 16.3 3" stroke="#9a8a7a" stroke-width="0.9" fill="none"/><path d="M4.5 14L9.5 9.2V12H16.2V16.2H9.5V18.8Z" fill="url(#gorange)" stroke="#c8601e" stroke-width="0.8" stroke-linejoin="round"/></svg>
<svg style="position:absolute;left:538px;top:245px;" width="26" height="34" viewBox="0 0 26 34"><path d="M3 2V13L6 10.5L9 15L11 14L8.5 9.5H12.5Z" fill="#555" stroke="#fff" stroke-width="0.8"/><circle cx="14.3" cy="23.4" r="8.6" fill="url(#gcirc)" stroke="#9a9a9a" stroke-width="0.7"/><path d="M10 23.4H18.6M14.3 19.1V27.7" stroke="#fff" stroke-width="2.2"/></svg>
<svg style="position:absolute;left:575px;top:246px;" width="30" height="32" viewBox="0 0 30 32"><path d="M2 2H22L26 6V31H2Z" fill="url(#gfloppy)" stroke="#2d5aa8" stroke-width="0.7"/><path d="M7 2.5H19V10H7Z" fill="#e0e0e0"/><path d="M15 4H18V9H15Z" fill="#3d6fc0"/><path d="M5 14H23V31H5Z" fill="#f4f6fa"/><path d="M7 18H20M7 21H20M7 24H18" stroke="#9aa8c0" stroke-width="0.8"/><circle cx="21.8" cy="24.6" r="7" fill="url(#ggreen)" stroke="#2a8a2a" stroke-width="0.6"/><path d="M18.5 25.5A3.5 3.5 0 1 0 21 21.3" stroke="#fff" stroke-width="1.8" fill="none"/><path d="M19.5 19.3L22.5 21.3L19.8 23.6Z" fill="#fff"/></svg>
<svg style="position:absolute;left:614px;top:246px;" width="28" height="33" viewBox="0 0 28 33"><path d="M2 2H22L26 6V32H2Z" fill="url(#gfloppy)" stroke="#2d5aa8" stroke-width="0.7"/><path d="M7 2.5H19V10H7Z" fill="#e0e0e0"/><path d="M15 4H18V9H15Z" fill="#3d6fc0"/><path d="M5 14H23V32H5Z" fill="#f4f6fa"/><path d="M7 18H20M7 21H20M7 24H18" stroke="#9aa8c0" stroke-width="0.8"/></svg>
<svg style="position:absolute;left:698px;top:246px;" width="30" height="32" viewBox="0 0 30 32"><path d="M2 2H22L26 6V31H2Z" fill="url(#gfloppy)" stroke="#2d5aa8" stroke-width="0.7"/><path d="M7 2.5H19V10H7Z" fill="#e0e0e0"/><path d="M15 4H18V9H15Z" fill="#3d6fc0"/><path d="M5 14H23V31H5Z" fill="#f4f6fa"/><path d="M7 18H20M7 21H20M7 24H18" stroke="#9aa8c0" stroke-width="0.8"/><circle cx="21" cy="24" r="7" fill="url(#ggreen)" stroke="#2a8a2a" stroke-width="0.6"/><path d="M17.15 24H24.85M21 20.15V27.85" stroke="#e8f5e8" stroke-width="2.52"/></svg>
<svg style="position:absolute;left:740px;top:249px;" width="22" height="30" viewBox="0 0 22 30"><path d="M3 2L17 4L16 28L2 25Z" fill="url(#gpage)" stroke="#b9c2cc" stroke-width="0.8"/><circle cx="13.5" cy="20" r="5.6" fill="url(#ggreen)" stroke="#2a8a2a" stroke-width="0.6"/><path d="M10.42 20H16.58M13.5 16.92V23.08" stroke="#e8f5e8" stroke-width="2.02"/></svg>
<svg style="position:absolute;left:806px;top:248px;" width="26" height="30" viewBox="0 0 26 30"><path d="M2 4H20L18 25H4Z" fill="url(#gtrash)" stroke="#6a6a6a" stroke-width="0.8"/><ellipse cx="11" cy="4" rx="9" ry="2.5" fill="#d8d8d8" stroke="#777" stroke-width="0.8"/><path d="M8 9L7 21M13 8L10 21" stroke="#f0f0f0" stroke-width="1" opacity="0.8"/><circle cx="17.8" cy="20.7" r="6" fill="#8a8a8a" stroke="#666" stroke-width="0.6"/><path d="M15.3 18.2L20.3 23.2M20.3 18.2L15.3 23.2" stroke="#eee" stroke-width="1.8"/></svg>
<svg style="position:absolute;left:866px;top:249px;" width="29" height="29" viewBox="0 0 29 29"><circle cx="14.2" cy="14.3" r="12.5" fill="url(#gcirc)" stroke="#c8c8c8" stroke-width="1"/><path d="M14.2 6L21 13H17V21H11.4V13H7.4Z" fill="#fafafa"/></svg>
<svg style="position:absolute;left:907px;top:249px;" width="29" height="29" viewBox="0 0 29 29"><circle cx="14" cy="14.3" r="12.5" fill="url(#gcirc)" stroke="#c8c8c8" stroke-width="1"/><path d="M14 22.5L20.8 15.5H16.8V7.5H11.2V15.5H7.2Z" fill="#fafafa"/></svg>
<svg style="position:absolute;left:944px;top:249px;" width="34" height="31" viewBox="0 0 34 31"><path d="M2 3H25V25H2Z" fill="#f2f4f8" stroke="#8a9ab8" stroke-width="0.8"/><path d="M2 3H25V6H2Z" fill="#c4cfe0"/><path d="M19 1V4M22 1V4" stroke="#6a7aa0"/><path d="M4 17L9 13L14 19L25 8L30 13L14 28Z" fill="url(#gcheck)" stroke="#b01c10" stroke-width="0.7"/></svg>
<svg style="position:absolute;left:924px;top:340px;" width="18" height="19" viewBox="0 0 18 19"><defs><linearGradient id="gyel" x1="0" y1="0" x2="0" y2="1"><stop offset="0" stop-color="#fff6c0"/><stop offset="1" stop-color="#f0c030"/></linearGradient></defs><path d="M7 6L11 2V4.5L13.5 4.5L16 7.5L13 10.5V8H11V10Z" fill="url(#gyel)" stroke="#c88a10" stroke-width="0.9" stroke-linejoin="round"/><path d="M11 15L7 19V16.5H4.5L2 13.5L5 10.5V13H7V11Z" fill="url(#gyel)" stroke="#c88a10" stroke-width="0.9" stroke-linejoin="round"/></svg>
<svg style="position:absolute;left:1464px;top:428px;" width="24" height="90" viewBox="0 0 24 90"><rect x="9.5" y="4.5" width="9.5" height="3.5" rx="1" fill="#b0b0b0" stroke="#8f8f8f" stroke-width="1"/><path d="M14 9.5L18.5 14H16V18.5H12V14H9.5Z" fill="#f4f4f4" stroke="#8f8f8f" stroke-width="1" stroke-linejoin="round"/><path d="M9.5 31.5L14 27V29.5Q19 29.5 19 34V36.5H16V34Q16 32.5 14 32.5V35.5Z" fill="#f4f4f4" stroke="#8f8f8f" stroke-width="1" stroke-linejoin="round"/><rect x="8" y="35" width="3" height="3" fill="#9a9a9a"/><path d="M12 37.5H19.5" stroke="#8f8f8f" stroke-width="1"/><rect x="8" y="52" width="3" height="3" fill="#9a9a9a"/><path d="M12 52.5H19.5" stroke="#8f8f8f" stroke-width="1"/><path d="M9.5 57.5L14 62V59.5Q19 59.5 19 55V52.5H16V55Q16 56.5 14 56.5V53.5Z" fill="#f4f4f4" stroke="#8f8f8f" stroke-width="1" stroke-linejoin="round"/><path d="M14 80L18.5 75.5H16V71H12V75.5H9.5Z" fill="#f4f4f4" stroke="#8f8f8f" stroke-width="1" stroke-linejoin="round"/><rect x="9.5" y="81" width="9.5" height="3.5" rx="1" fill="#f4f4f4" stroke="#8f8f8f" stroke-width="1"/></svg>
<svg style="position:absolute;left:1464px;top:525px;" width="24" height="22" viewBox="0 0 24 22"><path d="M6.5 8H11V6.5L15.5 9.5L11 12.5V11H6.5Z" fill="#fff0b0" stroke="#b8860b" stroke-width="1"/><path d="M17 8.5H19.5V11H22V13.5H19.5V16H17V13.5H14.5V11H17Z" fill="#fff0b0" stroke="#b8860b" stroke-width="1"/><rect x="7" y="16" width="3" height="3" fill="#4a70b0"/><path d="M11 16.5H18" stroke="#4a70b0" stroke-width="1"/></svg>
<svg style="position:absolute;left:1464px;top:547px;" width="24" height="22" viewBox="0 0 24 22"><rect x="7" y="6" width="3" height="3" fill="#4a70b0"/><path d="M11 6.5H18" stroke="#4a70b0" stroke-width="1"/><path d="M17 8.5H19.5V11H22V13.5H19.5V16H17V13.5H14.5V11H17Z" fill="#fff0b0" stroke="#b8860b" stroke-width="1"/><path d="M6.5 13H11V11.5L15.5 14.5L11 17.5V16H6.5Z" fill="#fff0b0" stroke="#b8860b" stroke-width="1"/></svg>
<svg style="position:absolute;left:1464px;top:570px;" width="24" height="22" viewBox="0 0 24 22"><rect x="7" y="2" width="3" height="3" fill="#4a70b0"/><path d="M11 3.5H18" stroke="#4a70b0" stroke-width="1"/><rect x="7" y="6" width="3" height="3" fill="#4a70b0"/><path d="M11 6.5H18" stroke="#4a70b0" stroke-width="1"/><path d="M17 7.5H19.5V10H22V12.5H19.5V15H17V12.5H14.5V10H17Z" fill="#dde6f8" stroke="#3a5a9a" stroke-width="1"/><path d="M6.5 13H11V11.5L15.5 14.5L11 17.5V16H6.5Z" fill="#dde6f8" stroke="#3a5a9a" stroke-width="1"/></svg>
<svg style="position:absolute;left:1470px;top:601px;" width="16" height="16" viewBox="0 0 16 16"><path d="M2 4L4 2L8 6L12 2L14 4L10 8L14 12L12 14L8 10L4 14L2 12L6 8Z" fill="#e8283a" stroke="#b01020" stroke-width="0.6"/></svg>
</body></html>
